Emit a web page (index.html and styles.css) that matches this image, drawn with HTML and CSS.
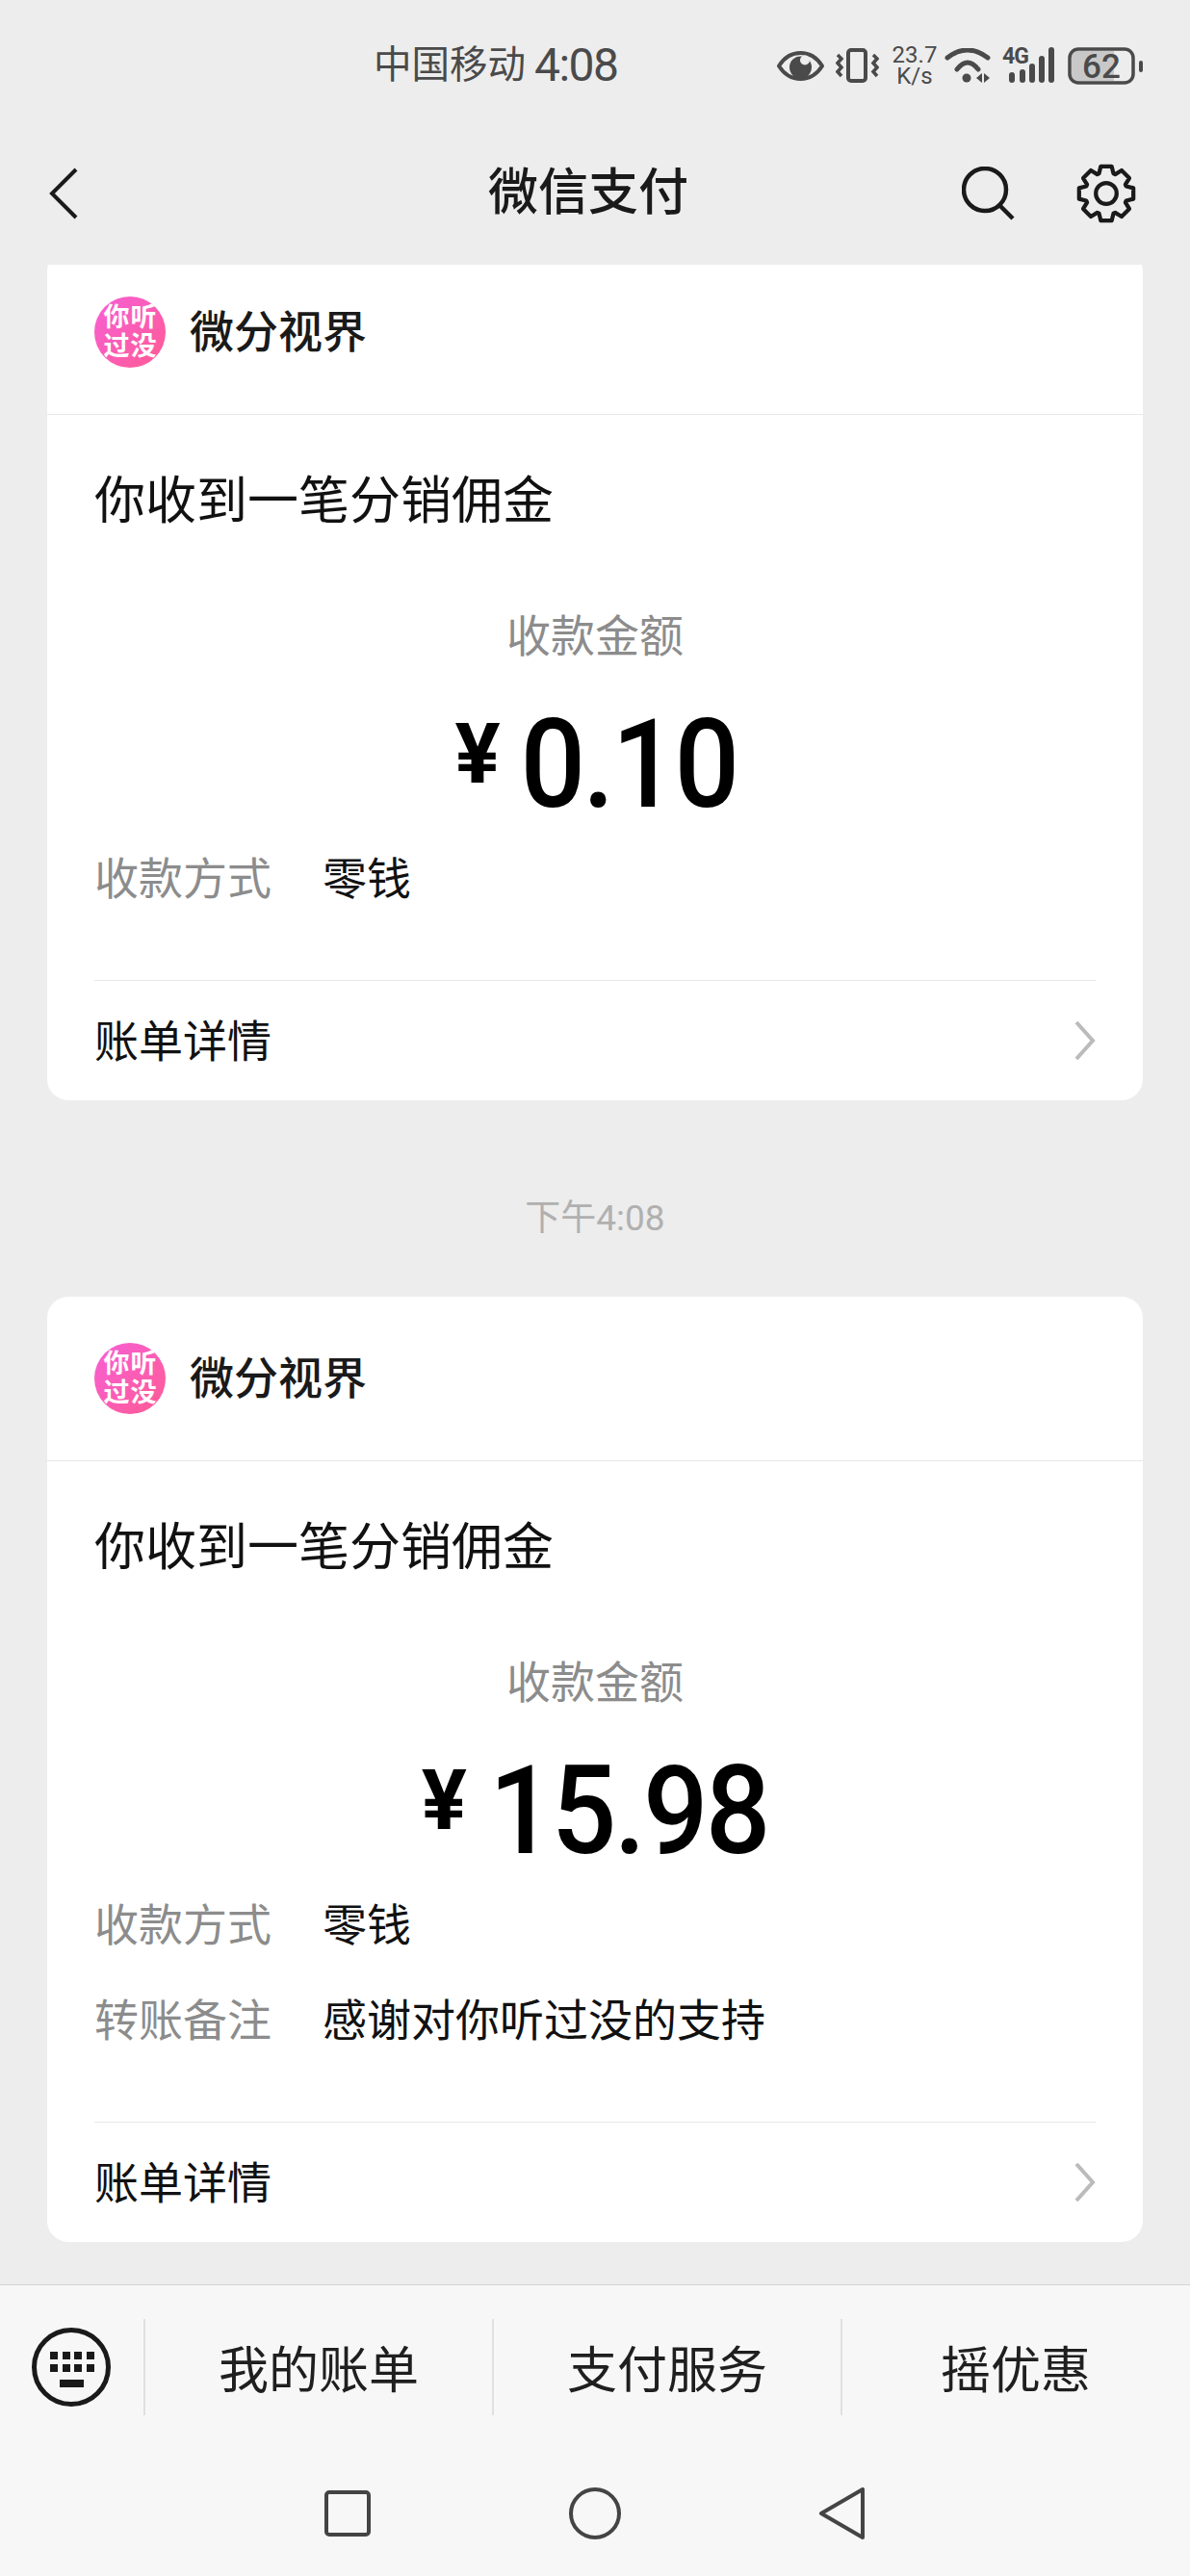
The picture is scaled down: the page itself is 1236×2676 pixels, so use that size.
FILE: index.html
```html
<!DOCTYPE html>
<html lang="zh-CN">
<head>
    <meta charset="UTF-8">
    <meta name="viewport" content="width=device-width, initial-scale=1.0">
    <title>微信支付</title>
    <link rel="stylesheet" href="styles.css">
</head>
<body>

<div class="status-bar">
    <span class="carrier">中国移动</span>
    <span class="clock">4:08</span>
    <div class="status-icons">
        <svg class="ic-eye" width="49" height="31" viewBox="0 0 49 31">
            <path d="M2 15.500C8 6 16 2 24.500 2S41 6 47 15.500C41 25 33 29 24.500 29S8 25 2 15.500Z" fill="none" stroke="#4a4a4a" stroke-width="4" stroke-linejoin="round"/>
            <circle cx="24.500" cy="17" r="11.500" fill="#4a4a4a"/>
            <circle cx="29" cy="9.500" r="5" fill="#ededed"/>
        </svg>
        <svg class="ic-vibrate" width="45" height="36" viewBox="0 0 45 36">
            <rect x="13" y="2" width="18" height="32" rx="3" fill="none" stroke="#4a4a4a" stroke-width="4"/>
            <path d="M2 7L6 11L2 15.500L6 20L2 24.500L6 29M39 7L43 11L39 15.500L43 20L39 24.500L43 29" fill="none" stroke="#4a4a4a" stroke-width="3.500"/>
        </svg>
        <div class="net-speed"><span>23.7</span><span>K/s</span></div>
        <svg class="ic-wifi" width="48" height="36" viewBox="0 0 48 36">
            <path d="M3 10Q24-6 45 10M13 22Q24 8 35 22" fill="none" stroke="#4a4a4a" stroke-width="5" stroke-linecap="round"/>
            <circle cx="23" cy="31" r="4.500" fill="#4a4a4a"/>
            <path d="M33 31L39 26V36ZM41 26L47 31L41 36Z" fill="#4a4a4a"/>
        </svg>
        <svg class="ic-signal" width="54" height="40" viewBox="0 0 54 40">
            <text class="ic-signal-label" x="0" y="18">4G</text>
            <rect x="7" y="27" width="6" height="11" rx="3"/>
            <rect x="18" y="24" width="6" height="14" rx="3"/>
            <rect x="28" y="18" width="6" height="20" rx="3"/>
            <rect x="38" y="10" width="6" height="28" rx="3"/>
            <rect x="48" y="1" width="6" height="37" rx="3"/>
        </svg>
        <svg class="ic-battery" width="78" height="39" viewBox="0 0 78 39">
            <rect x="4" y="4" width="44" height="31" fill="#c8c8c8"/>
            <rect x="2" y="2" width="66" height="35" rx="9" fill="none" stroke="#4a4a4a" stroke-width="3.500"/>
            <rect x="74" y="14" width="4" height="12" rx="2" fill="#4a4a4a"/>
            <text class="ic-battery-label" x="35" y="32" text-anchor="middle">62</text>
        </svg>
    </div>
</div>

<div class="nav-bar">
    <svg width="30" height="54" viewBox="0 0 30 54">
        <path d="M28 2L3 27L28 52" fill="none" stroke="#1a1a1a" stroke-width="4"/>
    </svg>
    <h1 class="nav-title">微信支付</h1>
    <div class="nav-actions">
        <svg width="56" height="56" viewBox="0 0 56 56">
            <circle cx="24" cy="24" r="22" fill="none" stroke="#1a1a1a" stroke-width="4.500"/>
            <path d="M39 40L53 54" fill="none" stroke="#1a1a1a" stroke-width="4.500"/>
        </svg>
        <svg width="62" height="64" viewBox="-33 -33 66 66">
            <path d="M-8-22L-6-30H6L8-22L9.900-21.200L17-25.500L25.500-17L21.200-9.900L22-8L30-6V6L22 8L21.200 9.900L25.500 17L17 25.500L9.900 21.200L8 22L6 30H-6L-8 22L-9.900 21.200L-17 25.500L-25.500 17L-21.200 9.900L-22 8L-30 6V-6L-22-8L-21.200-9.900L-25.500-17L-17-25.500L-9.900-21.200Z" fill="none" stroke="#1a1a1a" stroke-width="4.500" stroke-linejoin="round"/>
            <circle r="11.500" fill="none" stroke="#1a1a1a" stroke-width="4.500"/>
        </svg>
    </div>
</div>

<div class="messages">
    <div class="card card-scrolled">
        <div class="card-head">
            <div class="avatar"><span>你</span><span>听</span><span>过</span><span>没</span></div>
            <div class="card-name">微分视界</div>
        </div>
        <div class="card-title">你收到一笔分销佣金</div>
        <div class="amount-label">收款金额</div>
        <div class="amount"><span class="yen">¥</span><span class="amount-num">0.10</span></div>
        <div class="rows">
            <div class="row"><span class="row-key">收款方式</span><span>零钱</span></div>
        </div>
        <div class="card-foot">
            <span class="foot-text">账单详情</span>
            <svg width="22" height="40" viewBox="0 0 22 40"><path d="M2 1L19 20L2 39" fill="none" stroke="#bbb" stroke-width="4"/></svg>
        </div>
    </div>

    <div class="time-label">下午4:08</div>

    <div class="card">
        <div class="card-head">
            <div class="avatar"><span>你</span><span>听</span><span>过</span><span>没</span></div>
            <div class="card-name">微分视界</div>
        </div>
        <div class="card-title">你收到一笔分销佣金</div>
        <div class="amount-label">收款金额</div>
        <div class="amount"><span class="yen">¥</span><span class="amount-num">15.98</span></div>
        <div class="rows">
            <div class="row"><span class="row-key">收款方式</span><span>零钱</span></div>
            <div class="row"><span class="row-key">转账备注</span><span>感谢对你听过没的支持</span></div>
        </div>
        <div class="card-foot">
            <span class="foot-text">账单详情</span>
            <svg width="22" height="40" viewBox="0 0 22 40"><path d="M2 1L19 20L2 39" fill="none" stroke="#bbb" stroke-width="4"/></svg>
        </div>
    </div>
</div>

<div class="bottom">
    <div class="menu">
        <div class="menu-keyboard">
            <svg width="84" height="84" viewBox="0 0 84 84">
                <circle cx="42" cy="42" r="38.500" fill="none" stroke="#1a1a1a" stroke-width="5"/>
                <g fill="#1a1a1a">
                    <rect x="20" y="26" width="8" height="8"/><rect x="33" y="26" width="8" height="8"/>
                    <rect x="45" y="26" width="8" height="8"/><rect x="58" y="26" width="8" height="8"/>
                    <rect x="20" y="39" width="8" height="8"/><rect x="33" y="39" width="8" height="8"/>
                    <rect x="45" y="39" width="8" height="8"/><rect x="58" y="39" width="8" height="8"/>
                    <rect x="30" y="55" width="25" height="8"/>
                </g>
            </svg>
        </div>
        <div class="menu-item">我的账单</div>
        <div class="menu-item">支付服务</div>
        <div class="menu-item">摇优惠</div>
    </div>
    <div class="sys-nav">
        <div class="sys-btn">
            <svg width="50" height="50" viewBox="0 0 50 50"><rect x="3" y="3" width="44" height="44" rx="3" fill="none" stroke="#444" stroke-width="4"/></svg>
        </div>
        <div class="sys-btn">
            <svg width="54" height="54" viewBox="0 0 54 54"><circle cx="27" cy="27" r="25" fill="none" stroke="#444" stroke-width="4"/></svg>
        </div>
        <div class="sys-btn">
            <svg width="48" height="54" viewBox="0 0 48 54"><path d="M45 2V52L2 27Z" fill="none" stroke="#444" stroke-width="4" stroke-linejoin="round"/></svg>
        </div>
    </div>
</div>

</body>
</html>
```

FILE: styles.css
```css
* { box-sizing: border-box; }
body { margin: 0; width: 1236px; height: 2676px; display: flex; flex-direction: column; background: #ededed; color: #111; font-family: Roboto, "Noto Sans CJK SC", sans-serif; overflow: hidden; }

.status-bar { height: 136px; flex: none; display: flex; align-items: center; gap: 9px; padding: 0 49px 0 388px; color: #4a4a4a; }
.carrier { font-size: 39.500px; line-height: 48px; }
.clock { font-size: 48px; line-height: 48px; letter-spacing: -1.500px; }
.status-icons { margin-left: auto; display: flex; align-items: center; gap: 12px; }
.net-speed { width: 46px; margin: 0 -4px 0 2px; display: flex; flex-direction: column; align-items: center; font-size: 24px; line-height: 22px; }
.ic-signal { fill: #4a4a4a; overflow: visible; }
.ic-signal-label { font-size: 23px; font-weight: 700; letter-spacing: -1px; }
.ic-battery { margin-left: 2px; overflow: visible; }
.ic-battery-label { font-size: 35px; font-weight: 500; fill: #4a4a4a; }

.nav-bar { height: 139px; flex: none; display: flex; align-items: center; padding: 0 56px 10px 51px; position: relative; }
.nav-title { position: absolute; left: 0; right: 14px; margin: 0; text-align: center; font-size: 52px; line-height: 60px; font-weight: 500; color: #1a1a1a; }
.nav-actions { margin-left: auto; display: flex; align-items: center; gap: 63px; }

.messages { flex: 1; min-height: 0; overflow: hidden; padding: 0 49px; }
.card { background: #fff; border-radius: 22px; }
.card-scrolled { margin-top: -15px; }
.card-head { height: 171px; display: flex; align-items: center; gap: 25px; padding: 0 49px; border-bottom: 1px solid #e8e8e8; }
.avatar { width: 74px; height: 74px; border-radius: 50%; background: linear-gradient(135deg, #f75fd6, #ff5b94); display: grid; grid-template-columns: 28px 28px; justify-content: center; align-content: center; color: #fff; font-size: 27px; line-height: 30px; font-weight: 700; text-align: center; }
.card-name { font-size: 46px; line-height: 60px; font-weight: 500; color: #1a1a1a; }
.card-title { margin: 55px 49px 0; font-size: 53px; line-height: 70px; }
.amount-label { margin-top: 75px; text-align: center; font-size: 46px; line-height: 60px; color: #8c8c8c; }
.amount { margin-top: 38px; height: 130px; padding-left: 10px; text-align: center; font-size: 128px; line-height: 130px; font-weight: 500; color: #000; }
.amount-num { display: inline-block; letter-spacing: -3px; transform: scaleX(0.93); }
.yen { font-size: 88px; font-weight: 700; vertical-align: 25px; line-height: 1; margin-right: 12px; }
.rows { margin: 24px 49px 0; display: flex; flex-direction: column; gap: 39px; }
.row { display: flex; font-size: 46px; line-height: 60px; }
.row-key { width: 237px; color: #8c8c8c; }
.card-foot { margin: 75px 49px 0; height: 125px; border-top: 1px solid #e8e8e8; display: flex; align-items: center; justify-content: space-between; font-size: 46px; }
.foot-text { margin-bottom: 6px; }

.time-label { height: 204px; padding-top: 34px; display: flex; align-items: center; justify-content: center; font-size: 37px; color: #b0b0b0; }

.bottom { height: 303px; flex: none; background: #f7f7f7; border-top: 1px solid #d4d4d4; }
.menu { margin-top: 35px; height: 100px; display: flex; }
.menu-keyboard { width: 149px; padding: 8px 0 0 32px; }
.menu-item { width: 362px; padding-bottom: 2px; display: flex; align-items: center; justify-content: center; border-left: 2px solid #e0e0e0; font-size: 52px; color: #1f1f1f; }
.sys-nav { margin-top: 75px; display: flex; justify-content: center; }
.sys-btn { width: 257px; height: 54px; display: flex; align-items: center; justify-content: center; }
```
